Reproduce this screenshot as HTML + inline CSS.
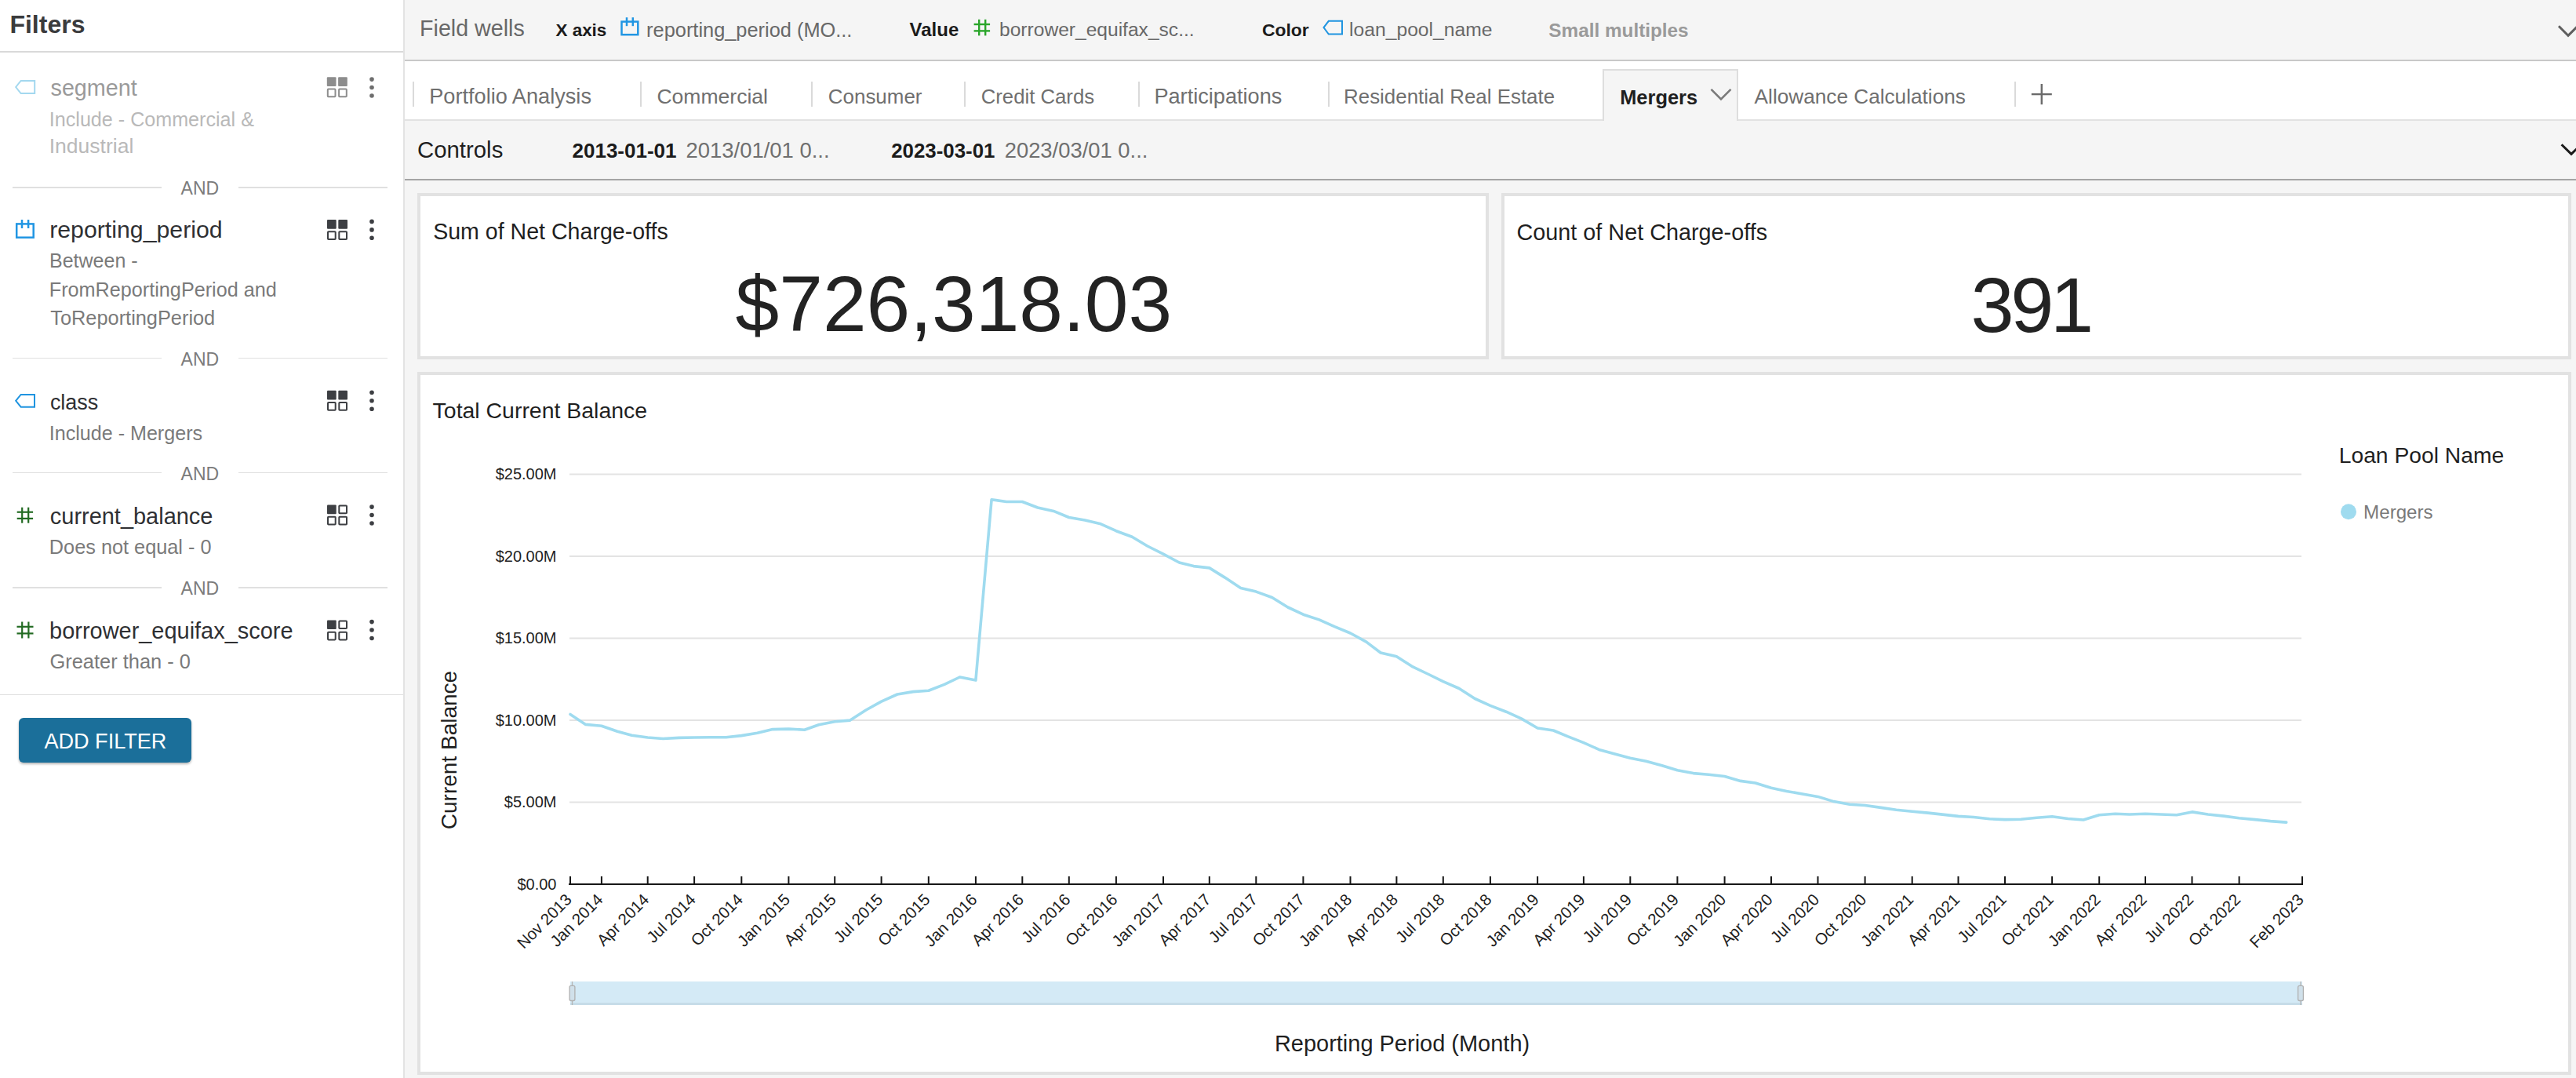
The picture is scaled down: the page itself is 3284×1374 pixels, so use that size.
<!DOCTYPE html>
<html><head><meta charset="utf-8"><style>
html,body{margin:0;padding:0;width:3284px;height:1374px;overflow:hidden;background:#f5f5f5;font-family:"Liberation Sans",sans-serif;}
.ab{position:absolute;}
.t{position:absolute;white-space:pre;line-height:1.1172;font-family:"Liberation Sans",sans-serif;}
</style></head><body>
<div class='ab' style='left:0px;top:0px;width:514px;height:1374px;background:#fff'></div><div class='ab' style='left:514px;top:0px;width:2px;height:1374px;background:#e3e3e3'></div><div class='ab' style='left:516px;top:0px;width:2768px;height:1374px;background:#f5f5f5'></div><div class='ab' style='left:516px;top:76px;width:2768px;height:2px;background:#c8c8c8'></div><div class='ab' style='left:516px;top:78px;width:2768px;height:74px;background:#fff'></div><div class='ab' style='left:516px;top:152px;width:2768px;height:2px;background:#e2e2e2'></div><div class='ab' style='left:516px;top:228px;width:2768px;height:2px;background:#a4a4a4'></div><div class='ab' style='left:0px;top:65px;width:514px;height:1.6px;background:#d9d9d9'></div><div class='ab' style='left:16px;top:238.1px;width:190px;height:1.6px;background:#e0e0e0'></div><div class='ab' style='left:304px;top:238.1px;width:190px;height:1.6px;background:#e0e0e0'></div><div class='ab' style='left:16px;top:455.9px;width:190px;height:1.6px;background:#e0e0e0'></div><div class='ab' style='left:304px;top:455.9px;width:190px;height:1.6px;background:#e0e0e0'></div><div class='ab' style='left:16px;top:601.7px;width:190px;height:1.6px;background:#e0e0e0'></div><div class='ab' style='left:304px;top:601.7px;width:190px;height:1.6px;background:#e0e0e0'></div><div class='ab' style='left:16px;top:748.1px;width:190px;height:1.6px;background:#e0e0e0'></div><div class='ab' style='left:304px;top:748.1px;width:190px;height:1.6px;background:#e0e0e0'></div><div class='ab' style='left:0px;top:884.6px;width:514px;height:1.6px;background:#dedede'></div><div class='ab' style='left:24.3px;top:915px;width:219.7px;height:56.5px;background:#1b6f9a;border-radius:6px;box-shadow:0 2px 3px rgba(0,0,0,0.28)'></div><div class='ab' style='left:525.8px;top:104px;width:2px;height:32px;background:#dadada'></div><div class='ab' style='left:815.8px;top:104px;width:2px;height:32px;background:#dadada'></div><div class='ab' style='left:1034.1px;top:104px;width:2px;height:32px;background:#dadada'></div><div class='ab' style='left:1229px;top:104px;width:2px;height:32px;background:#dadada'></div><div class='ab' style='left:1451px;top:104px;width:2px;height:32px;background:#dadada'></div><div class='ab' style='left:1692.7px;top:104px;width:2px;height:32px;background:#dadada'></div><div class='ab' style='left:2568.3px;top:104px;width:2px;height:32px;background:#dadada'></div><div class='ab' style='left:2043px;top:88px;width:173px;height:66px;background:#f5f5f5;border:2px solid #dedede;border-bottom:none;box-sizing:border-box'></div><div class='ab' style='left:532px;top:246px;width:1366px;height:212px;background:#fff;border:4px solid #e2e2e2;box-sizing:border-box'></div><div class='ab' style='left:1914px;top:246px;width:1364px;height:212px;background:#fff;border:4px solid #e2e2e2;box-sizing:border-box'></div><div class='ab' style='left:532px;top:474px;width:2746px;height:896px;background:#fff;border:4px solid #e2e2e2;box-sizing:border-box'></div>
<svg class='ab' style='left:0;top:0' width='3284' height='1374' font-family='Liberation Sans'><rect x='726' y='1021.5' width='2208' height='2' fill='#e3e3e3'/><rect x='726' y='917.0' width='2208' height='2' fill='#e3e3e3'/><rect x='726' y='812.5' width='2208' height='2' fill='#e3e3e3'/><rect x='726' y='708.0' width='2208' height='2' fill='#e3e3e3'/><rect x='726' y='603.5' width='2208' height='2' fill='#e3e3e3'/><text x='709.5' y='1133.9' text-anchor='end' font-size='20' fill='#1f1f1f'>$0.00</text><text x='709.5' y='1029.4' text-anchor='end' font-size='20' fill='#1f1f1f'>$5.00M</text><text x='709.5' y='924.9' text-anchor='end' font-size='20' fill='#1f1f1f'>$10.00M</text><text x='709.5' y='820.4' text-anchor='end' font-size='20' fill='#1f1f1f'>$15.00M</text><text x='709.5' y='715.9' text-anchor='end' font-size='20' fill='#1f1f1f'>$20.00M</text><text x='709.5' y='611.4' text-anchor='end' font-size='20' fill='#1f1f1f'>$25.00M</text><rect x='725' y='1126' width='2211' height='2' fill='#161616'/><rect x='726.0' y='1117' width='2' height='10' fill='#161616'/><text x='730.0' y='1148.0' text-anchor='end' font-size='20.6' fill='#1f1f1f' transform='rotate(-45 730.0 1148.0)'>Nov 2013</text><rect x='765.9' y='1117' width='2' height='10' fill='#161616'/><text x='769.9' y='1148.0' text-anchor='end' font-size='20.6' fill='#1f1f1f' transform='rotate(-45 769.9 1148.0)'>Jan 2014</text><rect x='824.7' y='1117' width='2' height='10' fill='#161616'/><text x='828.7' y='1148.0' text-anchor='end' font-size='20.6' fill='#1f1f1f' transform='rotate(-45 828.7 1148.0)'>Apr 2014</text><rect x='884.1' y='1117' width='2' height='10' fill='#161616'/><text x='888.1' y='1148.0' text-anchor='end' font-size='20.6' fill='#1f1f1f' transform='rotate(-45 888.1 1148.0)'>Jul 2014</text><rect x='944.3' y='1117' width='2' height='10' fill='#161616'/><text x='948.3' y='1148.0' text-anchor='end' font-size='20.6' fill='#1f1f1f' transform='rotate(-45 948.3 1148.0)'>Oct 2014</text><rect x='1004.4' y='1117' width='2' height='10' fill='#161616'/><text x='1008.4' y='1148.0' text-anchor='end' font-size='20.6' fill='#1f1f1f' transform='rotate(-45 1008.4 1148.0)'>Jan 2015</text><rect x='1063.2' y='1117' width='2' height='10' fill='#161616'/><text x='1067.2' y='1148.0' text-anchor='end' font-size='20.6' fill='#1f1f1f' transform='rotate(-45 1067.2 1148.0)'>Apr 2015</text><rect x='1122.6' y='1117' width='2' height='10' fill='#161616'/><text x='1126.6' y='1148.0' text-anchor='end' font-size='20.6' fill='#1f1f1f' transform='rotate(-45 1126.6 1148.0)'>Jul 2015</text><rect x='1182.8' y='1117' width='2' height='10' fill='#161616'/><text x='1186.8' y='1148.0' text-anchor='end' font-size='20.6' fill='#1f1f1f' transform='rotate(-45 1186.8 1148.0)'>Oct 2015</text><rect x='1242.9' y='1117' width='2' height='10' fill='#161616'/><text x='1246.9' y='1148.0' text-anchor='end' font-size='20.6' fill='#1f1f1f' transform='rotate(-45 1246.9 1148.0)'>Jan 2016</text><rect x='1302.3' y='1117' width='2' height='10' fill='#161616'/><text x='1306.3' y='1148.0' text-anchor='end' font-size='20.6' fill='#1f1f1f' transform='rotate(-45 1306.3 1148.0)'>Apr 2016</text><rect x='1361.8' y='1117' width='2' height='10' fill='#161616'/><text x='1365.8' y='1148.0' text-anchor='end' font-size='20.6' fill='#1f1f1f' transform='rotate(-45 1365.8 1148.0)'>Jul 2016</text><rect x='1421.9' y='1117' width='2' height='10' fill='#161616'/><text x='1425.9' y='1148.0' text-anchor='end' font-size='20.6' fill='#1f1f1f' transform='rotate(-45 1425.9 1148.0)'>Oct 2016</text><rect x='1482.0' y='1117' width='2' height='10' fill='#161616'/><text x='1486.0' y='1148.0' text-anchor='end' font-size='20.6' fill='#1f1f1f' transform='rotate(-45 1486.0 1148.0)'>Jan 2017</text><rect x='1540.8' y='1117' width='2' height='10' fill='#161616'/><text x='1544.8' y='1148.0' text-anchor='end' font-size='20.6' fill='#1f1f1f' transform='rotate(-45 1544.8 1148.0)'>Apr 2017</text><rect x='1600.3' y='1117' width='2' height='10' fill='#161616'/><text x='1604.3' y='1148.0' text-anchor='end' font-size='20.6' fill='#1f1f1f' transform='rotate(-45 1604.3 1148.0)'>Jul 2017</text><rect x='1660.4' y='1117' width='2' height='10' fill='#161616'/><text x='1664.4' y='1148.0' text-anchor='end' font-size='20.6' fill='#1f1f1f' transform='rotate(-45 1664.4 1148.0)'>Oct 2017</text><rect x='1720.5' y='1117' width='2' height='10' fill='#161616'/><text x='1724.5' y='1148.0' text-anchor='end' font-size='20.6' fill='#1f1f1f' transform='rotate(-45 1724.5 1148.0)'>Jan 2018</text><rect x='1779.4' y='1117' width='2' height='10' fill='#161616'/><text x='1783.4' y='1148.0' text-anchor='end' font-size='20.6' fill='#1f1f1f' transform='rotate(-45 1783.4 1148.0)'>Apr 2018</text><rect x='1838.8' y='1117' width='2' height='10' fill='#161616'/><text x='1842.8' y='1148.0' text-anchor='end' font-size='20.6' fill='#1f1f1f' transform='rotate(-45 1842.8 1148.0)'>Jul 2018</text><rect x='1898.9' y='1117' width='2' height='10' fill='#161616'/><text x='1902.9' y='1148.0' text-anchor='end' font-size='20.6' fill='#1f1f1f' transform='rotate(-45 1902.9 1148.0)'>Oct 2018</text><rect x='1959.1' y='1117' width='2' height='10' fill='#161616'/><text x='1963.1' y='1148.0' text-anchor='end' font-size='20.6' fill='#1f1f1f' transform='rotate(-45 1963.1 1148.0)'>Jan 2019</text><rect x='2017.9' y='1117' width='2' height='10' fill='#161616'/><text x='2021.9' y='1148.0' text-anchor='end' font-size='20.6' fill='#1f1f1f' transform='rotate(-45 2021.9 1148.0)'>Apr 2019</text><rect x='2077.3' y='1117' width='2' height='10' fill='#161616'/><text x='2081.3' y='1148.0' text-anchor='end' font-size='20.6' fill='#1f1f1f' transform='rotate(-45 2081.3 1148.0)'>Jul 2019</text><rect x='2137.4' y='1117' width='2' height='10' fill='#161616'/><text x='2141.4' y='1148.0' text-anchor='end' font-size='20.6' fill='#1f1f1f' transform='rotate(-45 2141.4 1148.0)'>Oct 2019</text><rect x='2197.6' y='1117' width='2' height='10' fill='#161616'/><text x='2201.6' y='1148.0' text-anchor='end' font-size='20.6' fill='#1f1f1f' transform='rotate(-45 2201.6 1148.0)'>Jan 2020</text><rect x='2257.0' y='1117' width='2' height='10' fill='#161616'/><text x='2261.0' y='1148.0' text-anchor='end' font-size='20.6' fill='#1f1f1f' transform='rotate(-45 2261.0 1148.0)'>Apr 2020</text><rect x='2316.5' y='1117' width='2' height='10' fill='#161616'/><text x='2320.5' y='1148.0' text-anchor='end' font-size='20.6' fill='#1f1f1f' transform='rotate(-45 2320.5 1148.0)'>Jul 2020</text><rect x='2376.6' y='1117' width='2' height='10' fill='#161616'/><text x='2380.6' y='1148.0' text-anchor='end' font-size='20.6' fill='#1f1f1f' transform='rotate(-45 2380.6 1148.0)'>Oct 2020</text><rect x='2436.7' y='1117' width='2' height='10' fill='#161616'/><text x='2440.7' y='1148.0' text-anchor='end' font-size='20.6' fill='#1f1f1f' transform='rotate(-45 2440.7 1148.0)'>Jan 2021</text><rect x='2495.5' y='1117' width='2' height='10' fill='#161616'/><text x='2499.5' y='1148.0' text-anchor='end' font-size='20.6' fill='#1f1f1f' transform='rotate(-45 2499.5 1148.0)'>Apr 2021</text><rect x='2555.0' y='1117' width='2' height='10' fill='#161616'/><text x='2559.0' y='1148.0' text-anchor='end' font-size='20.6' fill='#1f1f1f' transform='rotate(-45 2559.0 1148.0)'>Jul 2021</text><rect x='2615.1' y='1117' width='2' height='10' fill='#161616'/><text x='2619.1' y='1148.0' text-anchor='end' font-size='20.6' fill='#1f1f1f' transform='rotate(-45 2619.1 1148.0)'>Oct 2021</text><rect x='2675.2' y='1117' width='2' height='10' fill='#161616'/><text x='2679.2' y='1148.0' text-anchor='end' font-size='20.6' fill='#1f1f1f' transform='rotate(-45 2679.2 1148.0)'>Jan 2022</text><rect x='2734.0' y='1117' width='2' height='10' fill='#161616'/><text x='2738.0' y='1148.0' text-anchor='end' font-size='20.6' fill='#1f1f1f' transform='rotate(-45 2738.0 1148.0)'>Apr 2022</text><rect x='2793.5' y='1117' width='2' height='10' fill='#161616'/><text x='2797.5' y='1148.0' text-anchor='end' font-size='20.6' fill='#1f1f1f' transform='rotate(-45 2797.5 1148.0)'>Jul 2022</text><rect x='2853.6' y='1117' width='2' height='10' fill='#161616'/><text x='2857.6' y='1148.0' text-anchor='end' font-size='20.6' fill='#1f1f1f' transform='rotate(-45 2857.6 1148.0)'>Oct 2022</text><rect x='2934.0' y='1117' width='2' height='10' fill='#161616'/><text x='2938.0' y='1148.0' text-anchor='end' font-size='20.6' fill='#1f1f1f' transform='rotate(-45 2938.0 1148.0)'>Feb 2023</text><path d='M727.0 910.5 L746.6 923.4 L766.9 925.2 L787.1 932.2 L805.4 937.2 L825.7 940.0 L845.3 941.5 L865.5 940.4 L885.1 940.0 L905.4 939.7 L925.6 939.7 L945.3 937.6 L965.5 934.2 L985.1 929.6 L1005.4 929.1 L1025.6 930.2 L1043.9 923.7 L1064.2 919.8 L1083.8 918.1 L1104.0 905.0 L1123.6 894.1 L1143.9 885.0 L1164.2 881.6 L1183.8 880.2 L1204.0 872.4 L1223.6 863.0 L1243.9 867.1 L1264.1 636.7 L1283.1 639.5 L1303.3 639.5 L1322.9 647.0 L1343.2 651.4 L1362.8 659.5 L1383.1 663.1 L1403.3 667.8 L1422.9 676.7 L1443.2 684.2 L1462.8 696.0 L1483.0 706.2 L1503.3 717.0 L1521.6 721.6 L1541.8 723.9 L1561.5 736.1 L1581.7 749.5 L1601.3 754.1 L1621.6 761.5 L1641.8 774.0 L1661.4 783.2 L1681.7 789.9 L1701.3 798.6 L1721.5 807.0 L1741.8 818.1 L1760.1 832.0 L1780.4 836.7 L1800.0 849.3 L1820.2 859.0 L1839.8 868.6 L1860.1 877.5 L1880.3 890.5 L1899.9 899.4 L1920.2 907.2 L1939.8 916.1 L1960.1 928.0 L1980.3 931.0 L1998.6 938.7 L2018.9 946.7 L2038.5 955.4 L2058.7 961.0 L2078.3 966.2 L2098.6 970.3 L2118.8 975.8 L2138.4 981.8 L2158.7 985.6 L2178.3 987.2 L2198.6 989.5 L2218.8 995.4 L2237.8 998.0 L2258.0 1004.3 L2277.6 1008.4 L2297.9 1012.0 L2317.5 1015.4 L2337.7 1021.6 L2358.0 1025.2 L2377.6 1026.5 L2397.9 1029.4 L2417.5 1032.2 L2437.7 1034.2 L2458.0 1036.1 L2476.3 1038.1 L2496.5 1040.4 L2516.1 1041.5 L2536.4 1043.8 L2556.0 1044.6 L2576.3 1044.3 L2596.5 1042.2 L2616.1 1040.7 L2636.4 1043.5 L2656.0 1045.0 L2676.2 1038.8 L2696.5 1037.3 L2714.8 1038.0 L2735.0 1037.3 L2754.6 1038.0 L2774.9 1038.8 L2794.5 1034.9 L2814.8 1038.0 L2835.0 1040.1 L2854.6 1042.7 L2874.9 1044.6 L2894.5 1046.6 L2914.7 1048.1' fill='none' stroke='#9fdbef' stroke-width='3.6' stroke-linejoin='round' stroke-linecap='round'/><text x='0' y='0' font-size='28' fill='#1f1f1f' text-anchor='middle' transform='translate(582 956) rotate(-90)'>Current Balance</text><rect x='727' y='1251' width='2208' height='30' fill='#d4eaf6'/><rect x='727' y='1278' width='2208' height='3' fill='#c6dce8'/><line x1='729.5' y1='1251' x2='729.5' y2='1281' stroke='#b5b5b5' stroke-width='1.3'/><rect x='726.1' y='1256.3' width='6.8' height='19.2' rx='2' fill='#d0e0ea' stroke='#b0b0b0' stroke-width='1.3'/><line x1='2933' y1='1251' x2='2933' y2='1281' stroke='#b5b5b5' stroke-width='1.3'/><rect x='2929.6' y='1256.3' width='6.8' height='19.2' rx='2' fill='#d0e0ea' stroke='#b0b0b0' stroke-width='1.3'/><circle cx='2994' cy='652.3' r='10' fill='#9fdbef'/></svg>
<svg class='ab' style='left:0;top:0' width='3284' height='1374'><path d='M26.6 102.9 L44.2 102.9 L44.2 119.0 L26.6 119.0 L20.2 111.0 Z' fill='none' stroke='#a3d8ef' stroke-width='2' stroke-linejoin='miter'/><rect x='416.8' y='98.3' width='11.7' height='11.7' rx='1' fill='#8d8d8d'/><rect x='431.1' y='98.3' width='11.7' height='11.7' rx='1' fill='#8d8d8d'/><rect x='417.8' y='113.6' width='9.7' height='9.7' rx='0.8' fill='none' stroke='#8d8d8d' stroke-width='2'/><rect x='432.1' y='113.6' width='9.7' height='9.7' rx='0.8' fill='none' stroke='#8d8d8d' stroke-width='2'/><circle cx='474' cy='101.1' r='2.8' fill='#6e6e6e'/><circle cx='474' cy='111.5' r='2.8' fill='#6e6e6e'/><circle cx='474' cy='122.0' r='2.8' fill='#6e6e6e'/><rect x='21.2' y='285.4' width='21.5' height='17.3' fill='none' stroke='#2196e3' stroke-width='2.5'/><line x1='28.0' y1='280.0' x2='28.0' y2='291.0' stroke='#2196e3' stroke-width='2.5'/><line x1='36.1' y1='280.0' x2='36.1' y2='291.0' stroke='#2196e3' stroke-width='2.5'/><rect x='417.0' y='280.0' width='11.7' height='11.7' rx='1' fill='#3d3f43'/><rect x='431.3' y='280.0' width='11.7' height='11.7' rx='1' fill='#3d3f43'/><rect x='418.0' y='295.3' width='9.7' height='9.7' rx='0.8' fill='none' stroke='#3d3f43' stroke-width='2'/><rect x='432.3' y='295.3' width='9.7' height='9.7' rx='0.8' fill='none' stroke='#3d3f43' stroke-width='2'/><circle cx='474' cy='282.4' r='2.8' fill='#3d3f43'/><circle cx='474' cy='292.9' r='2.8' fill='#3d3f43'/><circle cx='474' cy='303.3' r='2.8' fill='#3d3f43'/><path d='M26.6 502.9 L44.0 502.9 L44.0 518.7 L26.6 518.7 L20.2 510.8 Z' fill='none' stroke='#1f94e0' stroke-width='2' stroke-linejoin='miter'/><rect x='417.0' y='497.8' width='11.7' height='11.7' rx='1' fill='#3d3f43'/><rect x='431.3' y='497.8' width='11.7' height='11.7' rx='1' fill='#3d3f43'/><rect x='418.0' y='513.1' width='9.7' height='9.7' rx='0.8' fill='none' stroke='#3d3f43' stroke-width='2'/><rect x='432.3' y='513.1' width='9.7' height='9.7' rx='0.8' fill='none' stroke='#3d3f43' stroke-width='2'/><circle cx='474' cy='500.3' r='2.8' fill='#3d3f43'/><circle cx='474' cy='510.8' r='2.8' fill='#3d3f43'/><circle cx='474' cy='521.2' r='2.8' fill='#3d3f43'/><line x1='28.2' y1='646.7' x2='28.2' y2='666.7' stroke='#236b23' stroke-width='2.2'/><line x1='36.2' y1='646.7' x2='36.2' y2='666.7' stroke='#236b23' stroke-width='2.2'/><line x1='21.7' y1='652.7' x2='42.1' y2='652.7' stroke='#236b23' stroke-width='2.2'/><line x1='21.7' y1='660.9' x2='42.1' y2='660.9' stroke='#236b23' stroke-width='2.2'/><rect x='417.0' y='643.5' width='11.7' height='11.7' rx='1' fill='#3d3f43'/><rect x='432.3' y='644.5' width='9.7' height='9.7' rx='0.8' fill='none' stroke='#3d3f43' stroke-width='2'/><rect x='418.0' y='658.8' width='9.7' height='9.7' rx='0.8' fill='none' stroke='#3d3f43' stroke-width='2'/><rect x='432.3' y='658.8' width='9.7' height='9.7' rx='0.8' fill='none' stroke='#3d3f43' stroke-width='2'/><circle cx='474' cy='646.1' r='2.8' fill='#3d3f43'/><circle cx='474' cy='656.5' r='2.8' fill='#3d3f43'/><circle cx='474' cy='667.0' r='2.8' fill='#3d3f43'/><line x1='28.2' y1='792.5' x2='28.2' y2='813.5' stroke='#236b23' stroke-width='2.2'/><line x1='36.4' y1='792.5' x2='36.4' y2='813.5' stroke='#236b23' stroke-width='2.2'/><line x1='21.5' y1='798.8' x2='42.5' y2='798.8' stroke='#236b23' stroke-width='2.2'/><line x1='21.5' y1='807.4' x2='42.5' y2='807.4' stroke='#236b23' stroke-width='2.2'/><rect x='417.0' y='790.4' width='11.7' height='11.7' rx='1' fill='#3d3f43'/><rect x='432.3' y='791.4' width='9.7' height='9.7' rx='0.8' fill='none' stroke='#3d3f43' stroke-width='2'/><rect x='418.0' y='805.7' width='9.7' height='9.7' rx='0.8' fill='none' stroke='#3d3f43' stroke-width='2'/><rect x='432.3' y='805.7' width='9.7' height='9.7' rx='0.8' fill='none' stroke='#3d3f43' stroke-width='2'/><circle cx='474' cy='792.6' r='2.8' fill='#3d3f43'/><circle cx='474' cy='803.0' r='2.8' fill='#3d3f43'/><circle cx='474' cy='813.5' r='2.8' fill='#3d3f43'/><rect x='792.5' y='27.6' width='20.8' height='16.6' fill='none' stroke='#2196e3' stroke-width='2.5'/><line x1='799.0' y1='22.2' x2='799.0' y2='33.2' stroke='#2196e3' stroke-width='2.5'/><line x1='806.8' y1='22.2' x2='806.8' y2='33.2' stroke='#2196e3' stroke-width='2.5'/><line x1='1248.2' y1='24.8' x2='1248.2' y2='45.4' stroke='#2aa52a' stroke-width='2.4'/><line x1='1256.2' y1='24.8' x2='1256.2' y2='45.4' stroke='#2aa52a' stroke-width='2.4'/><line x1='1241.6' y1='31.0' x2='1262.1' y2='31.0' stroke='#2aa52a' stroke-width='2.4'/><line x1='1241.6' y1='39.4' x2='1262.1' y2='39.4' stroke='#2aa52a' stroke-width='2.4'/><path d='M1693.8 26.8 L1711.0 26.8 L1711.0 43.5 L1693.8 43.5 L1687.5 35.1 Z' fill='none' stroke='#1f94e0' stroke-width='2' stroke-linejoin='miter'/><polyline points='3262,33.3 3274,45.3 3286,33.3' fill='none' stroke='#5f5f5f' stroke-width='3'/><polyline points='3265.6,184.2 3278,196.4 3290.4,184.2' fill='none' stroke='#1b1b1b' stroke-width='3'/><polyline points='2181.5,113.8 2194,126.3 2206.5,113.8' fill='none' stroke='#7a7a7a' stroke-width='2.6'/><line x1='2602.8' y1='107' x2='2602.8' y2='133.2' stroke='#6b6b6b' stroke-width='2.4'/><line x1='2589.8' y1='120.1' x2='2615.8' y2='120.1' stroke='#6b6b6b' stroke-width='2.4'/></svg>
<div class='t' style='left:12.4px;top:14.0px;font-size:32.02px;font-weight:700;color:#3a3b3d;'>Filters</div><div class='t' style='left:64.5px;top:95.8px;font-size:28.76px;font-weight:400;color:#9a9a9a;'>segment</div><div class='t' style='left:62.8px;top:137.6px;font-size:25.14px;font-weight:400;color:#b9b9b9;'>Include - Commercial &amp;</div><div class='t' style='left:62.7px;top:172.3px;font-size:26.53px;font-weight:400;color:#b9b9b9;'>Industrial</div><div class='t' style='left:63.2px;top:276.3px;font-size:30.28px;font-weight:400;color:#2f3033;'>reporting_period</div><div class='t' style='left:63.0px;top:319.1px;font-size:25.00px;font-weight:400;color:#7a7a7a;'>Between -</div><div class='t' style='left:62.8px;top:354.6px;font-size:25.21px;font-weight:400;color:#7a7a7a;'>FromReportingPeriod and</div><div class='t' style='left:64.3px;top:390.8px;font-size:25.35px;font-weight:400;color:#7a7a7a;'>ToReportingPeriod</div><div class='t' style='left:63.9px;top:497.6px;font-size:26.94px;font-weight:400;color:#2f3033;'>class</div><div class='t' style='left:62.7px;top:537.6px;font-size:25.11px;font-weight:400;color:#7a7a7a;'>Include - Mergers</div><div class='t' style='left:63.8px;top:641.5px;font-size:28.96px;font-weight:400;color:#2f3033;'>current_balance</div><div class='t' style='left:62.8px;top:683.2px;font-size:25.31px;font-weight:400;color:#7a7a7a;'>Does not equal - 0</div><div class='t' style='left:63.1px;top:788.0px;font-size:28.95px;font-weight:400;color:#2f3033;'>borrower_equifax_score</div><div class='t' style='left:63.5px;top:829.2px;font-size:25.41px;font-weight:400;color:#7a7a7a;'>Greater than - 0</div><div class='t' style='left:230.6px;top:228.4px;font-size:23.00px;font-weight:400;color:#7b7b7b;'>AND</div><div class='t' style='left:230.6px;top:445.6px;font-size:23.00px;font-weight:400;color:#7b7b7b;'>AND</div><div class='t' style='left:230.6px;top:592.4px;font-size:23.00px;font-weight:400;color:#7b7b7b;'>AND</div><div class='t' style='left:230.6px;top:738.0px;font-size:23.00px;font-weight:400;color:#7b7b7b;'>AND</div><div class='t' style='left:56.4px;top:930.1px;font-size:27.09px;font-weight:400;color:#ffffff;'>ADD FILTER</div><div class='t' style='left:535.1px;top:20.7px;font-size:28.63px;font-weight:400;color:#686868;'>Field wells</div><div class='t' style='left:708.5px;top:26.3px;font-size:22.42px;font-weight:700;color:#1b1b1b;'>X axis</div><div class='t' style='left:824.1px;top:23.6px;font-size:25.38px;font-weight:400;color:#686868;'>reporting_period (MO...</div><div class='t' style='left:1159.6px;top:24.9px;font-size:23.97px;font-weight:700;color:#1b1b1b;'>Value</div><div class='t' style='left:1274.0px;top:24.4px;font-size:24.58px;font-weight:400;color:#686868;'>borrower_equifax_sc...</div><div class='t' style='left:1608.9px;top:25.9px;font-size:22.91px;font-weight:700;color:#1b1b1b;'>Color</div><div class='t' style='left:1720.1px;top:24.3px;font-size:24.66px;font-weight:400;color:#686868;'>loan_pool_name</div><div class='t' style='left:1974.3px;top:24.6px;font-size:24.32px;font-weight:700;color:#9a9a9a;'>Small multiples</div><div class='t' style='left:547.2px;top:108.1px;font-size:27.17px;font-weight:400;color:#6f6f6f;'>Portfolio Analysis</div><div class='t' style='left:837.4px;top:108.7px;font-size:26.56px;font-weight:400;color:#6f6f6f;'>Commercial</div><div class='t' style='left:1055.8px;top:109.2px;font-size:25.94px;font-weight:400;color:#6f6f6f;'>Consumer</div><div class='t' style='left:1250.7px;top:109.4px;font-size:25.72px;font-weight:400;color:#6f6f6f;'>Credit Cards</div><div class='t' style='left:1471.4px;top:108.1px;font-size:27.15px;font-weight:400;color:#6f6f6f;'>Participations</div><div class='t' style='left:1713.1px;top:109.3px;font-size:25.88px;font-weight:400;color:#6f6f6f;'>Residential Real Estate</div><div class='t' style='left:2065.2px;top:109.6px;font-size:25.43px;font-weight:700;color:#1f1f1f;'>Mergers</div><div class='t' style='left:2236.6px;top:109.0px;font-size:26.20px;font-weight:400;color:#6f6f6f;'>Allowance Calculations</div><div class='t' style='left:532.0px;top:174.9px;font-size:29.37px;font-weight:400;color:#1f1f1f;'>Controls</div><div class='t' style='left:729.5px;top:178.0px;font-size:26.01px;font-weight:700;color:#1b1b1b;'>2013-01-01</div><div class='t' style='left:874.5px;top:176.6px;font-size:27.45px;font-weight:400;color:#6f6f6f;'>2013/01/01 0...</div><div class='t' style='left:1136.2px;top:178.1px;font-size:25.85px;font-weight:700;color:#1b1b1b;'>2023-03-01</div><div class='t' style='left:1280.7px;top:176.7px;font-size:27.38px;font-weight:400;color:#6f6f6f;'>2023/03/01 0...</div><div class='t' style='left:552.2px;top:280.2px;font-size:28.57px;font-weight:400;color:#1f1f1f;'>Sum of Net Charge-offs</div><div class='t' style='left:937.6px;top:332.1px;font-size:100.09px;font-weight:400;color:#232323;'>$726,318.03</div><div class='t' style='left:1933.5px;top:280.2px;font-size:28.81px;font-weight:400;color:#1f1f1f;'>Count of Net Charge-offs</div><div class='t' style='left:2512.5px;top:334.1px;font-size:99.00px;font-weight:400;color:#232323;letter-spacing:-4.3px'>391</div><div class='t' style='left:551.6px;top:508.2px;font-size:28.45px;font-weight:400;color:#1f1f1f;'>Total Current Balance</div><div class='t' style='left:1624.9px;top:1313.8px;font-size:28.97px;font-weight:400;color:#1f1f1f;'>Reporting Period (Month)</div><div class='t' style='left:2981.7px;top:565.3px;font-size:28.28px;font-weight:400;color:#1f1f1f;'>Loan Pool Name</div><div class='t' style='left:3013.1px;top:638.8px;font-size:24.15px;font-weight:400;color:#7a7a7a;'>Mergers</div>
</body></html>
